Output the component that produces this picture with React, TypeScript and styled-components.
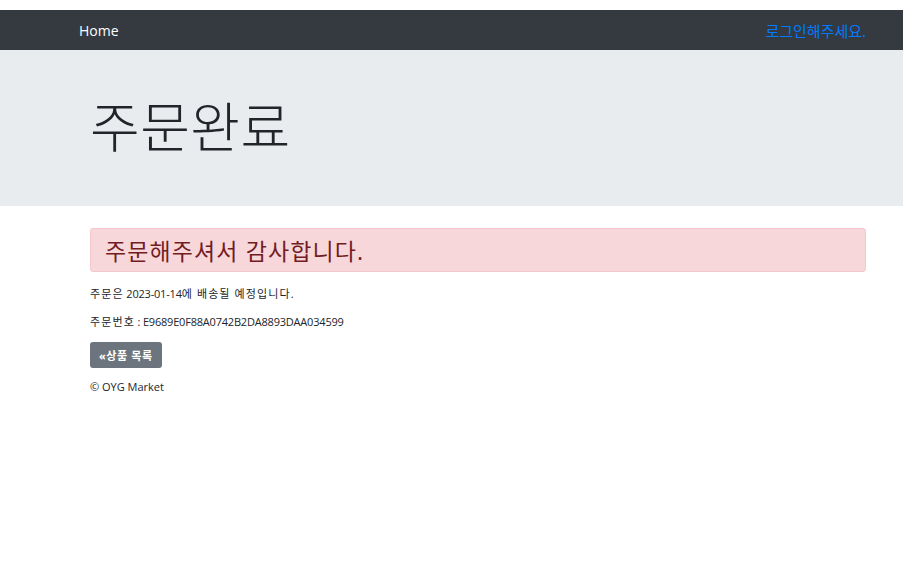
import { FC } from "react";
import styled, { createGlobalStyle } from "styled-components";

const GlobalStyle = createGlobalStyle`
  body {
    margin: 0;
    background: #fff;
    font-family: "Open Sans", "Noto Sans CJK KR", sans-serif;
    color: #212529;
  }
`;

const Page = styled.div`
  padding-top: 10px;
`;

const NavBar = styled.nav`
  height: 40px;
  background-color: #343a40;
  display: flex;
  align-items: center;
  justify-content: space-between;
  padding: 0 37px 0 79px;
`;

const NavLink = styled.a<{ accent?: boolean }>`
  font-size: ${(props) => (props.accent ? "15px" : "14px")};
  color: ${(props) => (props.accent ? "#007bff" : "#fff")};
  text-decoration: none;
`;

const Jumbotron = styled.header`
  height: 156px;
  box-sizing: border-box;
  background-color: #e9ecef;
  display: flex;
  align-items: center;
  padding: 0 0 8px 90px;
`;

const Title = styled.h1`
  margin: 0;
  font-size: 54px;
  font-weight: 300;
  color: #212529;
  letter-spacing: 0.5px;
`;

const Main = styled.main`
  padding: 22px 37px 0 90px;
`;

const Alert = styled.div`
  height: 44px;
  box-sizing: border-box;
  display: flex;
  align-items: center;
  padding: 0 14px;
  background-color: #f8d7da;
  border: 1px solid #f5c6cb;
  border-radius: 3px;
  color: #721c24;
  font-size: 23px;
  letter-spacing: 1.1px;
`;

const Text = styled.p`
  margin: 15px 0 0;
  font-size: 11px;
  line-height: 13px;
  letter-spacing: -0.2px;
`;

const Hangul = styled.span`
  letter-spacing: 1.1px;
`;

const Button = styled.button`
  margin-top: 14px;
  height: 26px;
  padding: 0 9px;
  border: none;
  border-radius: 3px;
  background-color: #6c757d;
  color: #fff;
  font-family: inherit;
  font-size: 11px;
  font-weight: 700;
  letter-spacing: 0.6px;
`;

const Footer = styled.footer`
  margin-top: 11px;
  font-size: 11px;
`;

const App: FC = () => {
  return (
    <Page>
      <GlobalStyle />
      <NavBar>
        <NavLink href="#">Home</NavLink>
        <NavLink href="#" accent>
          로그인해주세요.
        </NavLink>
      </NavBar>

      <Jumbotron>
        <Title>주문완료</Title>
      </Jumbotron>

      <Main>
        <Alert>주문해주셔서 감사합니다.</Alert>
        <Text>
          <Hangul>주문은</Hangul> 2023-01-14<Hangul>에 배송될 예정입니다.</Hangul>
        </Text>
        <Text>
          <Hangul>주문번호</Hangul> : E9689E0F88A0742B2DA8893DAA034599
        </Text>
        <Button>«상품 목록</Button>
        <Footer>© OYG Market</Footer>
      </Main>
    </Page>
  );
};

export default App;
